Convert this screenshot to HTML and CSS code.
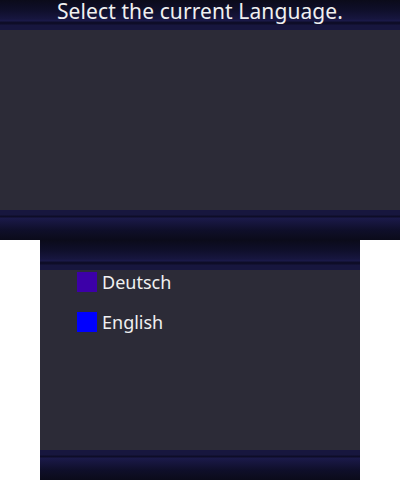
FILE: index.html
```html
<!DOCTYPE html>
<html>
<head>
<meta charset="utf-8">
<link rel="stylesheet" href="styles.css">
</head>
<body>
<div class="screen screen-top">
  <div class="bar bar-head">
    <div class="title">Select the current Language.</div>
  </div>
  <div class="content"></div>
  <div class="bar bar-foot"></div>
</div>
<div class="screen screen-bottom">
  <div class="bar bar-head"></div>
  <div class="content list">
    <div class="item">
      <span class="swatch swatch-de"></span>
      <span class="label">Deutsch</span>
    </div>
    <div class="item">
      <span class="swatch swatch-en"></span>
      <span class="label">English</span>
    </div>
  </div>
  <div class="bar bar-foot"></div>
</div>
</body>
</html>
```

FILE: styles.css
```css
html, body {
  margin: 0;
  padding: 0;
  background: #ffffff;
}
body {
  width: 400px;
  height: 480px;
  overflow: hidden;
  font-family: "Noto Sans", "Open Sans", sans-serif;
  color: #ffffff;
}
.screen {
  height: 240px;
  display: flex;
  flex-direction: column;
}
.screen-top {
  width: 400px;
}
.screen-bottom {
  width: 320px;
  margin: 0 auto;
}
.bar {
  height: 30px;
  flex: none;
}
.bar-head {
  background: linear-gradient(to bottom,
    #0b0b1a 0px,
    #0f0f2a 10px,
    #17163f 19px,
    #1b1a4a 21px,
    #0e0d28 22px,
    #0e0d28 24px,
    #17163e 25px,
    #17163e 30px);
  display: flex;
  justify-content: center;
}
.bar-foot {
  background: linear-gradient(to bottom,
    #17163e 0px,
    #17163e 5px,
    #0e0d28 6px,
    #0e0d28 7px,
    #1b1a4a 8px,
    #17163f 12px,
    #0f0f2a 20px,
    #0b0b1a 30px);
}
.content {
  flex: 1;
  background: #2c2b37;
}
.title {
  font-size: 21px;
  line-height: 22px;
  padding-top: 0;
  letter-spacing: 0.1px;
  color: #f0f0f0;
}
.list {
  display: flex;
  flex-direction: column;
  gap: 20px;
  padding: 2px 0 0 37px;
}
.item {
  display: flex;
  align-items: center;
  gap: 5px;
  height: 20px;
}
.swatch {
  width: 20px;
  height: 20px;
  flex: none;
}
.swatch-de { background: #3c00a8; }
.swatch-en { background: #0000ff; }
.label {
  font-size: 18px;
  line-height: 20px;
  color: #f0f0f0;
}
```
